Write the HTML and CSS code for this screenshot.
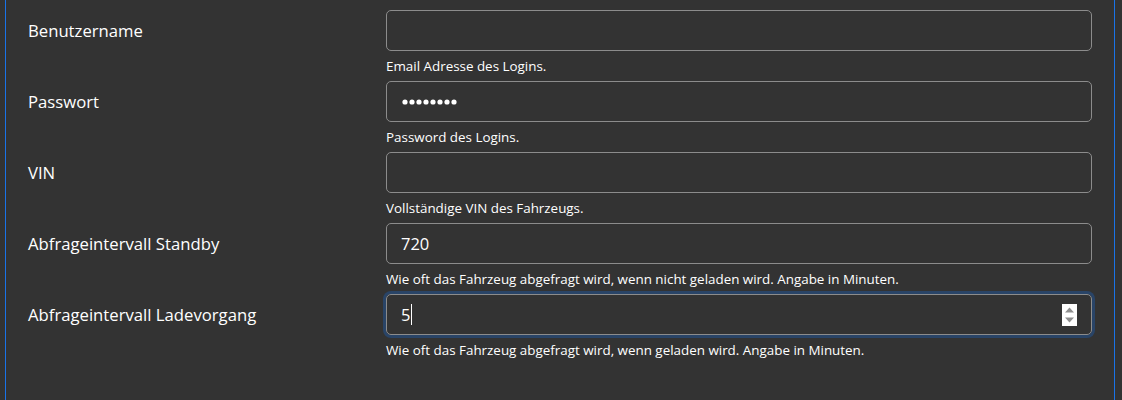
FILE: index.html
```html
<!DOCTYPE html>
<html lang="de">
<head>
<meta charset="utf-8">
<link rel="stylesheet" href="styles.css">
</head>
<body>
<div class="panel">
  <form class="form">
    <div class="row">
      <label class="label">Benutzername</label>
      <div class="control">
        <div class="field"></div>
        <div class="help">Email Adresse des Logins.</div>
      </div>
    </div>
    <div class="row">
      <label class="label">Passwort</label>
      <div class="control">
        <div class="field">
          <svg class="dots" width="56" height="6" viewBox="0 0 56 6" aria-label="Passwort">
            <circle cx="3" cy="3" r="2.6" fill="#fff"/>
            <circle cx="10" cy="3" r="2.6" fill="#fff"/>
            <circle cx="17" cy="3" r="2.6" fill="#fff"/>
            <circle cx="24" cy="3" r="2.6" fill="#fff"/>
            <circle cx="31" cy="3" r="2.6" fill="#fff"/>
            <circle cx="38" cy="3" r="2.6" fill="#fff"/>
            <circle cx="45" cy="3" r="2.6" fill="#fff"/>
            <circle cx="52" cy="3" r="2.6" fill="#fff"/>
          </svg>
        </div>
        <div class="help">Password des Logins.</div>
      </div>
    </div>
    <div class="row">
      <label class="label">VIN</label>
      <div class="control">
        <div class="field"></div>
        <div class="help">Vollständige VIN des Fahrzeugs.</div>
      </div>
    </div>
    <div class="row">
      <label class="label">Abfrageintervall Standby</label>
      <div class="control">
        <div class="field"><span class="value">720</span></div>
        <div class="help">Wie oft das Fahrzeug abgefragt wird, wenn nicht geladen wird. Angabe in Minuten.</div>
      </div>
    </div>
    <div class="row">
      <label class="label">Abfrageintervall Ladevorgang</label>
      <div class="control">
        <div class="field focused"><span class="value">5</span><span class="caret"></span>
          <span class="spin">
            <svg width="15" height="22" viewBox="0 0 15 22"><rect width="15" height="22" fill="#fff"/><path d="M7.5 3.5 L12 8.5 H3 Z" fill="#8f8f8f"/><path d="M3 13.5 H12 L7.5 18.5 Z" fill="#8f8f8f"/></svg>
          </span>
        </div>
        <div class="help">Wie oft das Fahrzeug abgefragt wird, wenn geladen wird. Angabe in Minuten.</div>
      </div>
    </div>
  </form>
</div>
</body>
</html>
```
FILE: styles.css
```css
html, body {
  margin: 0;
  padding: 0;
  background: #333333;
}
body {
  width: 1122px;
  height: 400px;
  overflow: hidden;
  font-family: "Open Sans", "Noto Sans", sans-serif;
  color: #ffffff;
}
.panel {
  margin-left: 5px;
  width: 1110px;
  height: 400px;
  border-left: 1px solid #1a73e8;
  border-right: 1px solid #1a73e8;
  box-sizing: border-box;
}
.form {
  padding: 10px 22px 0 22px;
  display: flex;
  flex-direction: column;
}
.row {
  display: grid;
  grid-template-columns: 358px 706px;
}
.label {
  height: 41px;
  display: flex;
  align-items: center;
  font-size: 16.7px;
}
.control {
  display: flex;
  flex-direction: column;
}
.field {
  position: relative;
  height: 41px;
  box-sizing: border-box;
  border: 1px solid #8c8c8c;
  border-radius: 5px;
  display: flex;
  align-items: center;
  padding-left: 14px;
  font-size: 16.5px;
}
.field.focused {
  box-shadow: 0 0 0 3px #294467;
}
.dots {
  display: block;
  margin-left: 1px;
}
.caret {
  display: inline-block;
  width: 1px;
  height: 21px;
  background: #ffffff;
  margin-left: 1px;
}
.spin {
  position: absolute;
  right: 14px;
  top: 9px;
  width: 15px;
  height: 22px;
  display: block;
}
.spin svg {
  display: block;
}
.help {
  font-size: 13.4px;
  line-height: 18px;
  margin: 6px 0 6px 0;
}
```
